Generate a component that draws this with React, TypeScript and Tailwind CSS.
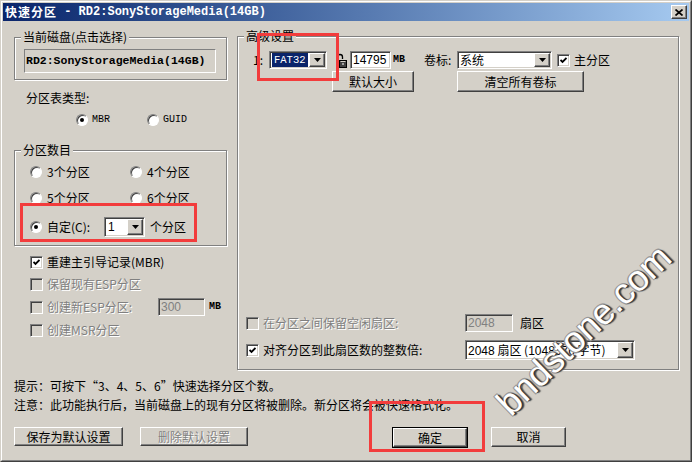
import React from "react";

const sunken =
  "border border-t-[#808080] border-l-[#808080] border-b-white border-r-white shadow-[inset_1px_1px_0_#404040,inset_-1px_-1px_0_#d4d0c8]";
const raised =
  "border border-t-white border-l-white border-b-[#404040] border-r-[#404040] shadow-[inset_-1px_-1px_0_#808080] bg-[#d4d0c8]";
const dim = "text-[#808080] [text-shadow:1px_1px_0_#fff]";

function Radio({ on }: { on?: boolean }) {
  return (
    <span className="relative block h-[12px] w-[12px] shrink-0 rounded-full border border-t-[#808080] border-l-[#808080] border-b-white border-r-white bg-white shadow-[inset_1px_1px_0_#404040]">
      {on && <span className="absolute left-[3px] top-[3px] h-[4px] w-[4px] rounded-full bg-black" />}
    </span>
  );
}

function Check({ on, off }: { on?: boolean; off?: boolean }) {
  return (
    <span
      className={`flex h-[13px] w-[13px] shrink-0 items-center justify-center ${sunken} ${
        off ? "bg-[#d4d0c8]" : "bg-white"
      }`}
    >
      {on && (
        <svg width="7" height="7" viewBox="0 0 7 7">
          <path d="M0.5 3 L2.5 5 L6.5 1" fill="none" stroke="#000" strokeWidth="1.8" />
        </svg>
      )}
    </span>
  );
}

function DropBtn() {
  return (
    <span className={`flex h-full w-[16px] shrink-0 items-center justify-center ${raised}`}>
      <svg width="7" height="4" viewBox="0 0 7 4">
        <path d="M0 0H7L3.5 4Z" fill="#000" />
      </svg>
    </span>
  );
}

function Combo({ className, children }: { className: string; children: React.ReactNode }) {
  return (
    <div className={`flex shrink-0 bg-white p-[1px] ${sunken} ${className}`}>
      <div className="flex min-w-0 flex-1 items-center overflow-hidden whitespace-nowrap">{children}</div>
      <DropBtn />
    </div>
  );
}

function Field({ className, off, children }: { className: string; off?: boolean; children?: React.ReactNode }) {
  return (
    <div
      className={`flex shrink-0 items-center pl-[2px] font-['Liberation_Sans',sans-serif] text-[12px] ${sunken} ${
        off ? "bg-[#d4d0c8] text-[#808080]" : "bg-white"
      } ${className}`}
    >
      {children}
    </div>
  );
}

function Group({ label, className, children }: { label: string; className: string; children: React.ReactNode }) {
  return (
    <div className={`relative border border-[#808080] shadow-[inset_1px_1px_0_#fff,1px_1px_0_#fff] ${className}`}>
      <span className="absolute left-[6px] top-[-8px] bg-[#d4d0c8] px-[2px] leading-[14px]">{label}</span>
      {children}
    </div>
  );
}

function Btn({ className, off, children }: { className: string; off?: boolean; children: React.ReactNode }) {
  return (
    <div className={`flex shrink-0 items-center justify-center ${raised} ${off ? dim : ""} ${className}`}>
      {children}
    </div>
  );
}

function Lock() {
  return (
    <svg width="12" height="15" viewBox="0 0 12 15" className="shrink-0">
      <path d="M2.5 8 V4 a2.5 2.5 0 0 1 5 0 V6" fill="none" stroke="#000" strokeWidth="1.3" />
      <rect x="4.5" y="7.5" width="7" height="7" fill="#404040" stroke="#000" />
      <path d="M5.5 8.5 H10.5" stroke="#d4d0c8" />
      <rect x="7.5" y="10" width="1" height="2" fill="#fff" />
    </svg>
  );
}

export default function App() {
  return (
    <div className="relative h-[462px] w-[692px] overflow-hidden bg-[#d4d0c8] font-['SimSun','Noto_Sans_CJK_SC',sans-serif] text-[12px] leading-[14px] text-black">
      <div className="flex h-full flex-col border border-t-[#d4d0c8] border-l-[#d4d0c8] border-b-[#404040] border-r-[#404040]">
        <div className="flex h-full flex-col border border-t-white border-l-white border-b-[#808080] border-r-[#808080] p-[1px]">
          {/* title bar */}
          <div className="flex h-[18px] shrink-0 items-center bg-linear-to-r from-[#0a246a] to-[#a6caf0] pl-[2px] pr-[2px] font-bold text-white">
            <span className="tracking-[1px]">快速分区</span>
            <span className="whitespace-pre font-['Liberation_Mono',monospace]">{" - RD2:SonyStorageMedia(14GB)"}</span>
            <div className={`ml-auto flex h-[14px] w-[16px] items-center justify-center ${raised}`}>
              <svg width="8" height="7" viewBox="0 0 8 7">
                <path d="M0.5 0.5 L7.5 6.5 M7.5 0.5 L0.5 6.5" stroke="#000" strokeWidth="1.7" />
              </svg>
            </div>
          </div>

          {/* body */}
          <div className="flex items-start gap-[10px] pl-[11px] pt-[16px]">
            {/* left column */}
            <div className="flex w-[213px] shrink-0 flex-col">
              <Group label="当前磁盘(点击选择)" className="h-[43px] pl-[9px] pt-[11px]">
                <div className="flex h-[24px] w-[192px] items-center border border-t-[#808080] border-l-[#808080] border-b-white border-r-white pl-[1px] font-['Liberation_Mono',monospace] text-[11.5px] font-bold">
                  RD2:SonyStorageMedia(14GB)
                </div>
              </Group>

              <div className="ml-[12px] mt-[11px]">分区表类型:</div>
              <div className="mt-[8px] flex h-[14px] items-center pl-[62px]">
                <div className="flex w-[71px] items-center gap-[4px]">
                  <Radio on />
                  <span className="font-['Liberation_Mono',monospace] text-[10px]">MBR</span>
                </div>
                <div className="flex items-center gap-[4px]">
                  <Radio />
                  <span className="font-['Liberation_Mono',monospace] text-[10px]">GUID</span>
                </div>
              </div>

              <Group label="分区数目" className="mt-[23px] h-[96px] pl-[15px] pt-[14px]">
                <div className="flex h-[14px] items-center">
                  <div className="flex w-[100px] items-center gap-[5px]">
                    <Radio />
                    <span>3个分区</span>
                  </div>
                  <div className="flex items-center gap-[5px]">
                    <Radio />
                    <span>4个分区</span>
                  </div>
                </div>
                <div className="mt-[12px] flex h-[14px] items-center">
                  <div className="flex w-[100px] items-center gap-[5px]">
                    <Radio />
                    <span>5个分区</span>
                  </div>
                  <div className="flex items-center gap-[5px]">
                    <Radio />
                    <span>6个分区</span>
                  </div>
                </div>
                <div className="mt-[12px] flex h-[20px] items-center">
                  <Radio on />
                  <span className="ml-[5px] w-[57px]">自定(C):</span>
                  <Combo className="h-[20px] w-[41px]">
                    <span className="pl-[2px] font-['Liberation_Sans',sans-serif]">1</span>
                  </Combo>
                  <span className="ml-[5px]">个分区</span>
                </div>
              </Group>

              <div className="ml-[16px] mt-[9px] flex h-[14px] items-center gap-[4px]">
                <Check on />
                <span>重建主引导记录(MBR)</span>
              </div>
              <div className={`ml-[16px] mt-[8px] flex h-[14px] items-center gap-[4px] ${dim}`}>
                <Check off />
                <span>保留现有ESP分区</span>
              </div>
              <div className="ml-[16px] mt-[7px] flex h-[18px] items-center">
                <Check off />
                <span className={`ml-[4px] w-[111px] ${dim}`}>创建新ESP分区:</span>
                <Field off className="h-[18px] w-[47px]">300</Field>
                <span className="ml-[4px] font-['Liberation_Mono',monospace] text-[10px] font-bold">MB</span>
              </div>
              <div className={`ml-[16px] mt-[7px] flex h-[14px] items-center gap-[4px] ${dim}`}>
                <Check off />
                <span>创建MSR分区</span>
              </div>
            </div>

            {/* right column */}
            <Group label="高级设置" className="-mt-[1px] flex h-[334px] w-[442px] shrink-0 flex-col pb-[9px] pt-[14px]">
              <div className="flex h-[18px] items-center">
                <span className="ml-[15px] w-[16px]">1:</span>
                <Combo className="h-[18px] w-[58px]">
                  <span className="m-[1px] flex h-[14px] flex-1 items-center bg-[#0a246a] pl-[2px] font-['Liberation_Mono',monospace] text-[10.5px] text-white">
                    FAT32
                  </span>
                </Combo>
                <span className="ml-[8px] flex">
                  <Lock />
                </span>
                <Field className="ml-[3px] h-[18px] w-[41px]">14795</Field>
                <span className="ml-[2px] w-[31px] font-['Liberation_Mono',monospace] text-[10px] font-bold">MB</span>
                <span className="w-[33px]">卷标:</span>
                <Combo className="h-[18px] w-[95px]">
                  <span className="pl-[1px]">系统</span>
                </Combo>
                <span className="ml-[5px]">
                  <Check on />
                </span>
                <span className="ml-[4px]">主分区</span>
              </div>
              <div className="mt-[2px] flex h-[21px]">
                <Btn className="ml-[94px] h-[21px] w-[82px]">默认大小</Btn>
                <Btn className="ml-[43px] h-[21px] w-[127px]">清空所有卷标</Btn>
              </div>

              <div className="flex-1" />

              <div className="flex h-[18px] items-center pl-[8px]">
                <Check off />
                <span className={`ml-[4px] w-[202px] ${dim}`}>在分区之间保留空闲扇区:</span>
                <Field off className="h-[18px] w-[48px]">2048</Field>
                <span className="ml-[7px]">扇区</span>
              </div>
              <div className="mt-[8px] flex h-[20px] items-center pl-[8px]">
                <Check on />
                <span className="ml-[4px] w-[202px]">对齐分区到此扇区数的整数倍:</span>
                <Combo className="h-[20px] w-[170px]">
                  <span className="pl-[1px]">
                    <span className="font-['Liberation_Sans',sans-serif]">2048</span> 扇区 (
                    <span className="font-['Liberation_Sans',sans-serif]">1048576</span> 字节)
                  </span>
                </Combo>
              </div>
            </Group>
          </div>

          {/* hints */}
          <div className="ml-[11px] mt-[9px]">提示：可按下“3、4、5、6”快速选择分区个数。</div>
          <div className="ml-[11px] mt-[5px]">注意：此功能执行后，当前磁盘上的现有分区将被删除。新分区将会被快速格式化。</div>

          {/* buttons */}
          <div className="mt-[15px] flex items-start pl-[11px]">
            <Btn className="h-[19px] w-[109px]">保存为默认设置</Btn>
            <Btn off className="ml-[17px] h-[19px] w-[108px]">删除默认设置</Btn>
            <div className="ml-[144px] h-[21px] w-[76px] shrink-0 border border-black">
              <Btn className="h-full w-full">确定</Btn>
            </div>
            <Btn className="ml-[23px] h-[20px] w-[75px]">取消</Btn>
          </div>
        </div>
      </div>

      {/* annotation boxes */}
      <div className="pointer-events-none absolute left-[257px] top-[33px] h-[48px] w-[82px] border-[3px] border-[#f23c3c]" />
      <div className="pointer-events-none absolute left-[20px] top-[203px] h-[39px] w-[177px] border-[3px] border-[#f23c3c]" />
      <div className="pointer-events-none absolute left-[369px] top-[401px] h-[51px] w-[116px] border-[3px] border-[#f23c3c]" />

      {/* watermark */}
      <div className="pointer-events-none absolute left-[584px] top-[330px] -translate-x-1/2 -translate-y-1/2 rotate-[-44deg] whitespace-nowrap font-['Liberation_Sans',sans-serif] text-[36px] leading-none text-white [text-shadow:1px_1px_0_#333,2px_2px_1px_#555,-1px_-1px_0_#999,1px_-1px_0_#999,-1px_1px_0_#999]">
        bndstone.com
      </div>
    </div>
  );
}
